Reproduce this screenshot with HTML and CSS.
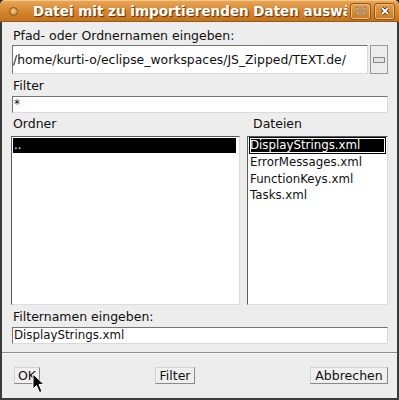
FILE: index.html
```html
<!DOCTYPE html>
<html lang="de">
<head>
    <meta charset="UTF-8">
    <title>Datei mit zu importierenden Daten auswählen</title>
    <link rel="stylesheet" href="styles.css">
</head>
<body>
    <div class="window">
        <div class="titlebar">
            <span class="title-icon"></span>
            <span class="title">Datei mit zu importierenden Daten auswählen</span>
            <div class="title-btns">
                <div class="tbtn">
                    <svg width="10" height="8" viewBox="0 0 10 8"><rect x="1" y="1" width="8" height="6" fill="none" stroke="#4a2a08" stroke-width="2"/><rect x="1" y="1" width="8" height="6" fill="none" stroke="#fff" stroke-width="1"/></svg>
                </div>
                <div class="tbtn">
                    <svg width="10" height="10" viewBox="0 0 10 10"><path d="M2 2 L8 8 M8 2 L2 8" stroke="#4a2a08" stroke-width="3.4"/><path d="M2 2 L8 8 M8 2 L2 8" stroke="#fff" stroke-width="1.8"/></svg>
                </div>
            </div>
        </div>

        <div class="content">
            <div class="label first">Pfad- oder Ordnernamen eingeben:</div>
            <div class="path-row">
                <div class="field path">/home/kurti-o/eclipse_workspaces/JS_Zipped/TEXT.de/</div>
                <div class="path-btn"><span></span></div>
            </div>

            <div class="label">Filter</div>
            <div class="field small">*</div>

            <div class="lists-head">
                <div class="label">Ordner</div>
                <div class="label">Dateien</div>
            </div>
            <div class="lists">
                <div class="list">
                    <div class="item sel">..</div>
                </div>
                <div class="list files">
                    <div class="item sel focus">DisplayStrings.xml</div>
                    <div class="item">ErrorMessages.xml</div>
                    <div class="item">FunctionKeys.xml</div>
                    <div class="item">Tasks.xml</div>
                </div>
            </div>

            <div class="label">Filternamen eingeben:</div>
            <div class="field small">DisplayStrings.xml</div>
        </div>

        <div class="separator"></div>

        <div class="buttons">
            <div class="btn ok">OK</div>
            <div class="btn filter">Filter</div>
            <div class="btn cancel">Abbrechen</div>
        </div>

        <svg class="cursor" width="13" height="21" viewBox="0 0 13 21">
            <path d="M1 1 L1 16 L4.5 12.5 L7.5 19.5 L10 18.5 L7 11.5 L12 11.5 Z" fill="#000" stroke="#fff" stroke-width="1"/>
        </svg>
    </div>
</body>
</html>
```

FILE: styles.css
```css
*{
    box-sizing: border-box;
}
html, body{
    margin: 0;
    padding: 0;
    background-color: #2e2622;
}
body{
    width: 399px;
    height: 400px;
    overflow: hidden;
    font-family: "DejaVu Sans", sans-serif;
    font-size: 12.5px;
    color: #101010;
}
.window{
    position: relative;
    display: flex;
    flex-direction: column;
    width: 399px;
    height: 400px;
    background-color: #ededed;
    border: 2px solid #3b3b3b;
    border-top: 0;
    border-radius: 5px 5px 0 0;
}
.titlebar{
    display: flex;
    align-items: center;
    height: 22px;
    margin: 0 -2px;
    padding: 0 4px 0 9px;
    border-radius: 5px 5px 0 0;
    background: linear-gradient(#e8a455, #d3842d 55%, #c4741e);
    border-top: 1px solid #f6c88c;
    border-bottom: 1px solid #9a5a16;
    overflow: hidden;
}
.title-icon{
    flex: none;
    width: 9px;
    height: 9px;
    border-radius: 50%;
    background: radial-gradient(circle at 50% 40%, #f3c98e, #c6812f);
    border: 1px solid #8e5618;
}
.title{
    flex: 1;
    margin-left: 15px;
    white-space: nowrap;
    overflow: hidden;
    font-weight: bold;
    font-size: 13.5px;
    color: #fff;
    text-shadow: 1px 1px 1px #5a3006;
}
.title-btns{
    display: flex;
    gap: 3px;
    flex: none;
    margin-left: 3px;
}
.tbtn{
    display: flex;
    align-items: center;
    justify-content: center;
    width: 21px;
    height: 17px;
    border: 1px solid #8f5614;
    border-radius: 3px;
    background: linear-gradient(#e4a04e, #c97b25);
    box-shadow: inset 0 0 0 1px #f0bb78;
}
.content{
    padding: 0 9px 0 10px;
}
.label{
    height: 15px;
    line-height: 15px;
    margin-top: 4px;
    padding-left: 1px;
    white-space: nowrap;
}
.label.first{
    margin-top: 6px;
}
.path-row{
    display: flex;
    gap: 2px;
    height: 29px;
    margin-top: 2px;
}
.field{
    background-color: #fff;
    border: 1px solid;
    border-color: #747474 #dadada #dadada #747474;
    font-size: 11.8px;
    white-space: nowrap;
    overflow: hidden;
}
.path{
    flex: 1;
    display: flex;
    align-items: center;
    padding-left: 0;
    font-size: 12.4px;
}
.path-btn{
    width: 18px;
    display: flex;
    align-items: center;
    justify-content: center;
    border: 1px solid #9a9a9a;
    background-color: #ececec;
}
.path-btn span{
    width: 12px;
    height: 6px;
    border: 1px solid #8a8a8a;
    background-color: #e4e4e4;
}
.small{
    height: 17px;
    line-height: 15px;
    margin-top: 3px;
    padding-left: 1px;
}
.lists-head{
    display: grid;
    grid-template-columns: 228px 1fr;
    gap: 12px;
    margin-top: -1px;
}
.lists{
    display: grid;
    grid-template-columns: 229px 1fr;
    gap: 7px;
    height: 169px;
    margin: 5px 0 0 -1px;
}
.list{
    background-color: #fff;
    border: 1px solid;
    border-color: #5a5a5a #dcdcdc #dcdcdc #5a5a5a;
    padding: 1px 3px 0 1px;
    font-size: 11.8px;
}
.files{
    padding: 0 1px;
}
.item{
    height: 16.5px;
    line-height: 16.5px;
    padding-left: 1px;
    white-space: nowrap;
}
.list .sel{
    background-color: #000;
    color: #fff;
    height: 15px;
    line-height: 15px;
}
.files .sel{
    height: 17px;
    line-height: 17px;
}
.focus{
    outline: 1px solid #fff;
    outline-offset: -2px;
}
.separator{
    height: 2px;
    margin-top: 8px;
    border-top: 1px solid #8c8c8c;
    border-bottom: 1px solid #fafafa;
}
.buttons{
    display: flex;
    justify-content: space-between;
    margin-top: 13px;
    padding: 0 9px 0 12px;
}
.btn{
    height: 17px;
    line-height: 15px;
    text-align: center;
    border: 1px solid;
    border-color: #d4d4d4 #8a8a8a #8a8a8a #d4d4d4;
    background-color: #efefef;
}
.ok{
    width: 26px;
}
.filter{
    width: 40px;
}
.cancel{
    width: 78px;
}
.cursor{
    position: absolute;
    left: 30px;
    top: 373px;
}
```
